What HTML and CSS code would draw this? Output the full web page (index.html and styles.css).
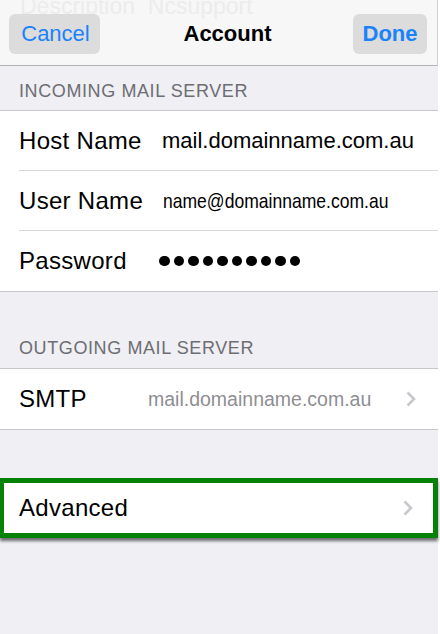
FILE: index.html
```html
<!DOCTYPE html>
<html>
<head>
<meta charset="utf-8">
<link rel="stylesheet" href="styles.css">
</head>
<body>
<div class="screen">
  <header class="nav">
    <div class="ghost">Description&nbsp;&nbsp;Ncsupport</div>
    <button class="navbtn cancel">Cancel</button>
    <div class="title">Account</div>
    <button class="navbtn done">Done</button>
  </header>

  <div class="section-head">INCOMING MAIL SERVER</div>
  <div class="group">
    <div class="row inset">
      <span class="label">Host Name</span>
      <span class="value">mail.domainname.com.au</span>
    </div>
    <div class="row inset">
      <span class="label">User Name</span>
      <span class="value narrow">name@domainname.com.au</span>
    </div>
    <div class="row">
      <span class="label">Password</span>
      <span class="dots"><i></i><i></i><i></i><i></i><i></i><i></i><i></i><i></i><i></i><i></i></span>
    </div>
  </div>

  <div class="section-head tall">OUTGOING MAIL SERVER</div>
  <div class="group">
    <div class="row">
      <span class="label smtp">SMTP</span>
      <span class="value muted">mail.domainname.com.au</span>
      <svg class="chev" width="12" height="18" viewBox="0 0 12 18"><path d="M2.5 2.5 L9 9 L2.5 15.5" fill="none" stroke="#c7c7cc" stroke-width="2.6"/></svg>
    </div>
  </div>

  <div class="spacer"></div>
  <div class="group highlight">
    <div class="row adv">
      <span class="label">Advanced</span>
      <svg class="chev" width="12" height="18" viewBox="0 0 12 18"><path d="M2.5 2.5 L9 9 L2.5 15.5" fill="none" stroke="#c7c7cc" stroke-width="2.6"/></svg>
    </div>
  </div>
</div>
</body>
</html>
```

FILE: styles.css
```css
* { box-sizing: border-box; }
html, body { margin: 0; padding: 0; background: #ffffff; }
body {
  font-family: "Liberation Sans", Arial, sans-serif;
  width: 440px;
  height: 634px;
  overflow: hidden;
}
.screen {
  width: 438px;
  height: 634px;
  background: #efeff4;
  display: flex;
  flex-direction: column;
}
.nav {
  position: relative;
  height: 66px;
  flex: none;
  background: #f7f7f7;
  border-bottom: 1px solid #b2b2b2;
  border-right: 1px solid #d0d0d0;
  display: flex;
  align-items: center;
  padding: 0 10px 0 9px;
  overflow: hidden;
}
.ghost {
  position: absolute;
  left: 20px;
  top: -7px;
  font-size: 23px;
  color: #ececec;
  white-space: nowrap;
}
.navbtn {
  position: relative;
  height: 40px;
  margin-top: 3px;
  border: 0;
  border-radius: 6px;
  background: #dcdcdc;
  color: #1a82fb;
  font-family: "Liberation Sans", Arial, sans-serif;
  font-size: 22px;
  padding: 0;
}
.cancel { width: 91px; padding-left: 2px; }
.done { width: 74px; font-weight: bold; }
.title {
  flex: 1;
  text-align: center;
  font-size: 22px;
  font-weight: bold;
  color: #000;
  margin-top: 3px;
  padding-left: 2px;
}
.section-head {
  height: 45px;
  flex: none;
  padding: 15px 0 0 19px;
  font-size: 18px;
  letter-spacing: 0.6px;
  color: #6d6d72;
  border-bottom: 1px solid #c8c7cc;
}
.section-head.tall {
  height: 77px;
  padding-top: 46px;
}
.group {
  background: #ffffff;
  border-bottom: 1px solid #c8c7cc;
  flex: none;
}
.row {
  height: 60px;
  display: flex;
  align-items: center;
  padding-left: 19px;
  position: relative;
}
.row.inset::after {
  content: "";
  position: absolute;
  left: 19px;
  right: 0;
  bottom: 0;
  border-bottom: 1px solid #d9d9dd;
}
.label {
  font-size: 24px;
  letter-spacing: 0.3px;
  color: #000;
  width: 143px;
  flex: none;
}
.label.smtp { width: 129px; }
.value {
  font-size: 22px;
  color: #000;
  white-space: nowrap;
}
.value.narrow {
  display: inline-block;
  font-size: 21px;
  transform: scaleX(0.835);
  transform-origin: left center;
  margin-left: 1px;
}
.value.muted {
  font-size: 19.5px;
  color: #8e8e93;
}
.dots {
  display: flex;
  gap: 4px;
  margin-left: -3px;
}
.dots i {
  width: 10.5px;
  height: 10.5px;
  border-radius: 50%;
  background: #000;
}
.chev {
  position: absolute;
  right: 21px;
  top: 21px;
}
.spacer {
  height: 48px;
  flex: none;
}
.highlight {
  border: 5px solid #058205;
  border-left-width: 4px;
  box-shadow: 0 3px 3px rgba(0, 0, 0, 0.55);
  height: 60px;
  width: 438px;
}
.row.adv {
  height: 50px;
  padding-left: 15px;
}
.row.adv .chev {
  right: 19px;
  top: 16px;
}
```
